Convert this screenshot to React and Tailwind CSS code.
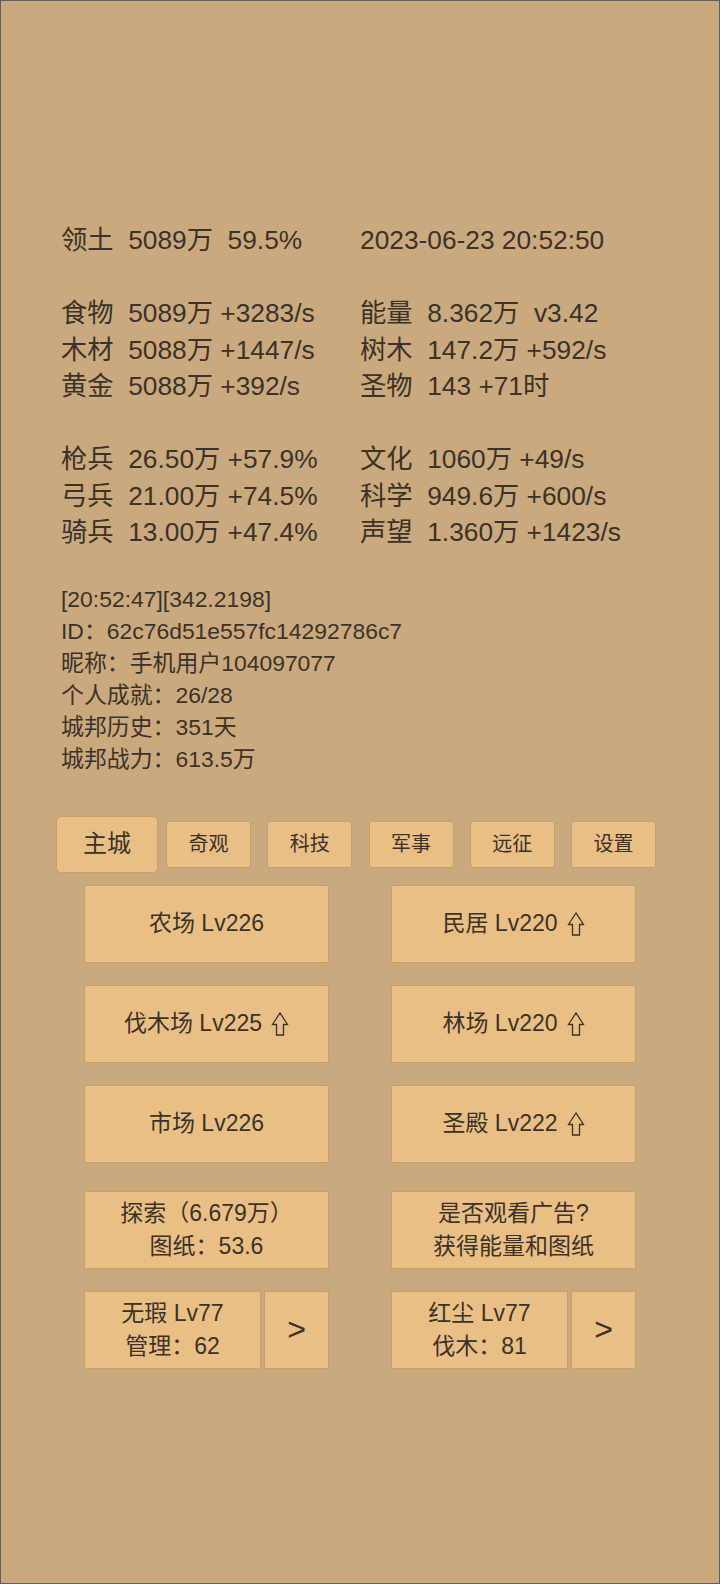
import React from 'react';

const FONT = "font-['Liberation_Sans','Noto_Sans_CJK_SC',sans-serif]";

const stats = [
  ['领土  5089万  59.5%', '2023-06-23 20:52:50'],
  null,
  ['食物  5089万 +3283/s', '能量  8.362万  v3.42'],
  ['木材  5088万 +1447/s', '树木  147.2万 +592/s'],
  ['黄金  5088万 +392/s', '圣物  143 +71时'],
  null,
  ['枪兵  26.50万 +57.9%', '文化  1060万 +49/s'],
  ['弓兵  21.00万 +74.5%', '科学  949.6万 +600/s'],
  ['骑兵  13.00万 +47.4%', '声望  1.360万 +1423/s'],
];

const info = [
  '[20:52:47][342.2198]',
  'ID：62c76d51e557fc14292786c7',
  '昵称：手机用户104097077',
  '个人成就：26/28',
  '城邦历史：351天',
  '城邦战力：613.5万',
];

const tabs = ['主城', '奇观', '科技', '军事', '远征', '设置'];

function UpArrow() {
  return (
    <svg width="18" height="24" viewBox="0 0 18 24" className="ml-[9px] shrink-0">
      <path d="M9 1 L1.5 12.5 H5.5 V23 H12.5 V12.5 H16.5 Z" fill="none" stroke="currentColor" strokeWidth="1.3" />
    </svg>
  );
}

function Btn({ children, className = '' }) {
  return (
    <div
      className={`h-[78px] flex flex-col items-center justify-center bg-[#eabf85] border border-[#c89e6a] rounded-[2px] text-[23px] leading-[33px] ${className}`}
    >
      {children}
    </div>
  );
}

function Building({ name, up }) {
  return (
    <Btn>
      <div className="flex items-center">
        <span className="whitespace-pre">{name}</span>
        {up && <UpArrow />}
      </div>
    </Btn>
  );
}

function Hero({ line1, line2 }) {
  return (
    <div className="flex gap-[3px]">
      <Btn className="w-[177px]">
        <span>{line1}</span>
        <span>{line2}</span>
      </Btn>
      <Btn className="flex-1 text-[32px]">
        <span>&gt;</span>
      </Btn>
    </div>
  );
}

export default function App() {
  return (
    <div className={`w-[720px] h-[1584px] box-border border border-[#5c5f68] bg-[#caa97f] text-[#3b3228] ${FONT}`}>
      {/* stats */}
      <div className="pt-[221px] pl-[60px] text-[26.3px] leading-[36.5px]">
        {stats.map((row, i) =>
          row ? (
            <div key={i} className="grid grid-cols-[299px_1fr] whitespace-pre">
              <span>{row[0]}</span>
              <span>{row[1]}</span>
            </div>
          ) : (
            <div key={i} className="h-[36.5px]" />
          )
        )}
      </div>

      {/* info */}
      <div className="mt-[32px] pl-[60px] text-[22.9px] leading-[32px]">
        {info.map((t) => (
          <div key={t} className="whitespace-pre">{t}</div>
        ))}
      </div>

      {/* tabs */}
      <div className="mt-[41px] ml-[55px] w-[608px] h-[57px] flex">
        {tabs.map((t, i) => (
          <div key={t} className="flex-1 flex items-center justify-center">
            {i === 0 ? (
              <div className="w-[102px] h-[57px] flex items-center justify-center bg-[#eabf85] border border-[#c89e6a] rounded-[5px] text-[24px]">
                {t}
              </div>
            ) : (
              <div className="w-[85px] h-[47px] flex items-center justify-center bg-[#eabf85] border border-[#c89e6a] rounded-[3px] text-[20px]">
                {t}
              </div>
            )}
          </div>
        ))}
      </div>

      {/* buildings */}
      <div className="mt-[12px] ml-[83px] w-[552px] grid grid-cols-[245px_245px] gap-x-[62px] gap-y-[22px]">
        <Building name="农场 Lv226" />
        <Building name="民居 Lv220" up />
        <Building name="伐木场 Lv225" up />
        <Building name="林场 Lv220" up />
        <Building name="市场 Lv226" />
        <Building name="圣殿 Lv222" up />
        <Btn className="mt-[6px]">
          <span>探索（6.679万）</span>
          <span>图纸：53.6</span>
        </Btn>
        <Btn className="mt-[6px]">
          <span>是否观看广告?</span>
          <span>获得能量和图纸</span>
        </Btn>
        <Hero line1="无瑕 Lv77" line2="管理：62" />
        <Hero line1="红尘 Lv77" line2="伐木：81" />
      </div>
    </div>
  );
}
